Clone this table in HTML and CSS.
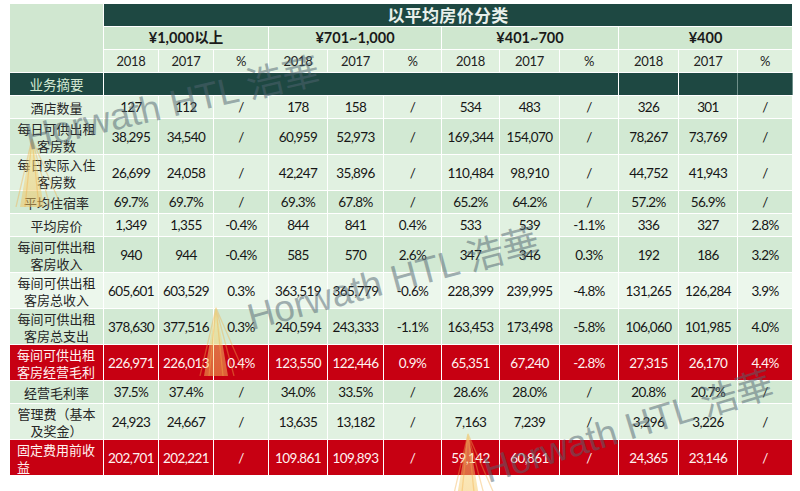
FILE: index.html
```html
<!DOCTYPE html>
<html lang="zh-CN">
<head>
<meta charset="utf-8">
<title>以平均房价分类</title>
<link rel="stylesheet" href="styles.css">
</head>
<body>
<div class="page">
  <table class="report">
    <colgroup>
      <col class="w-label">
      <col class="w55"><col class="w55"><col class="w55">
      <col class="w59"><col class="w56"><col class="w58">
      <col class="w58"><col class="w60"><col class="w59">
      <col class="w60"><col class="w59"><col class="w55">
    </colgroup>
    <thead>
      <tr class="s">
        <th class="corner" rowspan="3"></th>
        <th class="title" colspan="12">以平均房价分类</th>
      </tr>
      <tr class="s grp">
        <th colspan="3">¥1,000以上</th>
        <th colspan="3">¥701~1,000</th>
        <th colspan="3">¥401~700</th>
        <th colspan="3">¥400</th>
      </tr>
      <tr class="s yr">
        <th>2018</th><th>2017</th><th>%</th>
        <th>2018</th><th>2017</th><th>%</th>
        <th>2018</th><th>2017</th><th>%</th>
        <th>2018</th><th>2017</th><th>%</th>
      </tr>
    </thead>
    <tbody>
      <tr class="s sec">
        <th>业务摘要</th>
        <td colspan="9"></td><td></td><td></td><td></td>
      </tr>
      <tr class="s lt">
        <th>酒店数量</th>
        <td>127</td><td>112</td><td>/</td><td>178</td><td>158</td><td>/</td><td>534</td><td>483</td><td>/</td><td>326</td><td>301</td><td>/</td>
      </tr>
      <tr class="d dk">
        <th>每日可供出租客房数</th>
        <td>38,295</td><td>34,540</td><td>/</td><td>60,959</td><td>52,973</td><td>/</td><td>169,344</td><td>154,070</td><td>/</td><td>78,267</td><td>73,769</td><td>/</td>
      </tr>
      <tr class="d lt">
        <th>每日实际入住客房数</th>
        <td>26,699</td><td>24,058</td><td>/</td><td>42,247</td><td>35,896</td><td>/</td><td>110,484</td><td>98,910</td><td>/</td><td>44,752</td><td>41,943</td><td>/</td>
      </tr>
      <tr class="s dk">
        <th>平均住宿率</th>
        <td>69.7%</td><td>69.7%</td><td>/</td><td>69.3%</td><td>67.8%</td><td>/</td><td>65.2%</td><td>64.2%</td><td>/</td><td>57.2%</td><td>56.9%</td><td>/</td>
      </tr>
      <tr class="s lt">
        <th>平均房价</th>
        <td>1,349</td><td>1,355</td><td>-0.4%</td><td>844</td><td>841</td><td>0.4%</td><td>533</td><td>539</td><td>-1.1%</td><td>336</td><td>327</td><td>2.8%</td>
      </tr>
      <tr class="d dk">
        <th>每间可供出租客房收入</th>
        <td>940</td><td>944</td><td>-0.4%</td><td>585</td><td>570</td><td>2.6%</td><td>347</td><td>346</td><td>0.3%</td><td>192</td><td>186</td><td>3.2%</td>
      </tr>
      <tr class="d xl">
        <th>每间可供出租客房总收入</th>
        <td>605,601</td><td>603,529</td><td>0.3%</td><td>363,519</td><td>365,779</td><td>-0.6%</td><td>228,399</td><td>239,995</td><td>-4.8%</td><td>131,265</td><td>126,284</td><td>3.9%</td>
      </tr>
      <tr class="d dk">
        <th>每间可供出租客房总支出</th>
        <td>378,630</td><td>377,516</td><td>0.3%</td><td>240,594</td><td>243,333</td><td>-1.1%</td><td>163,453</td><td>173,498</td><td>-5.8%</td><td>106,060</td><td>101,985</td><td>4.0%</td>
      </tr>
      <tr class="d red">
        <th>每间可供出租客房经营毛利</th>
        <td>226,971</td><td>226,013</td><td>0.4%</td><td>123,550</td><td>122,446</td><td>0.9%</td><td>65,351</td><td>67,240</td><td>-2.8%</td><td>27,315</td><td>26,170</td><td>4.4%</td>
      </tr>
      <tr class="s dk">
        <th>经营毛利率</th>
        <td>37.5%</td><td>37.4%</td><td>/</td><td>34.0%</td><td>33.5%</td><td>/</td><td>28.6%</td><td>28.0%</td><td>/</td><td>20.8%</td><td>20.7%</td><td>/</td>
      </tr>
      <tr class="d lt">
        <th>管理费（基本及奖金）</th>
        <td>24,923</td><td>24,667</td><td>/</td><td>13,635</td><td>13,182</td><td>/</td><td>7,163</td><td>7,239</td><td>/</td><td>3,296</td><td>3,226</td><td>/</td>
      </tr>
      <tr class="d red">
        <th>固定费用前收益</th>
        <td>202,701</td><td>202,221</td><td>/</td><td>109.861</td><td>109,893</td><td>/</td><td>59,142</td><td>60,861</td><td>/</td><td>24,365</td><td>23,146</td><td>/</td>
      </tr>
    </tbody>
  </table>

  <svg class="logo logo1" viewBox="0 0 50 70" aria-hidden="true">
    <defs><linearGradient id="lg1" x1="0" y1="0" x2="0" y2="1"><stop offset="0" stop-color="#f8e88f"/><stop offset="1" stop-color="#f4c15a"/></linearGradient></defs>
    <polygon points="20,0 8,70 32,70" fill="url(#lg1)" opacity="0.5"/>
    <path d="M20,2 L4,70 M20,2 L13,70 M20,2 L27,70 M20,2 L38,70 M20,2 L47,64" stroke="#f2ae48" stroke-width="1.3" stroke-opacity="0.4" fill="none"/>
  </svg>
  <svg class="logo logo2" viewBox="0 0 50 70" aria-hidden="true">
    <defs><linearGradient id="lg2" x1="0" y1="0" x2="0" y2="1"><stop offset="0" stop-color="#f8e88f"/><stop offset="1" stop-color="#f4c15a"/></linearGradient></defs>
    <polygon points="20,0 8,70 32,70" fill="url(#lg2)" opacity="0.5"/>
    <path d="M20,2 L4,70 M20,2 L13,70 M20,2 L27,70 M20,2 L38,70 M20,2 L47,64" stroke="#f2ae48" stroke-width="1.3" stroke-opacity="0.4" fill="none"/>
  </svg>
  <svg class="logo logo3" viewBox="0 0 50 70" aria-hidden="true">
    <defs><linearGradient id="lg3" x1="0" y1="0" x2="0" y2="1"><stop offset="0" stop-color="#f8e88f"/><stop offset="1" stop-color="#f4c15a"/></linearGradient></defs>
    <polygon points="20,0 8,70 32,70" fill="url(#lg3)" opacity="0.5"/>
    <path d="M20,2 L4,70 M20,2 L13,70 M20,2 L27,70 M20,2 L38,70 M20,2 L47,64" stroke="#f2ae48" stroke-width="1.3" stroke-opacity="0.4" fill="none"/>
  </svg>

  <div class="wm wm1">Horwath HTL 浩華</div>
  <div class="wm wm2">Horwath HTL 浩華</div>
  <div class="wm wm3">Horwath HTL 浩華</div>
</div>
</body>
</html>
```

FILE: styles.css
```css
html, body {
  margin: 0;
  padding: 0;
  background: #ffffff;
}

.page {
  position: relative;
  width: 800px;
  height: 491px;
  box-sizing: border-box;
  padding: 3px 0 0 9px;
  overflow: hidden;
  font-family: "Lato", "Noto Sans CJK SC", sans-serif;
}

.report {
  border-collapse: collapse;
  table-layout: fixed;
  width: 783px;
}

.w-label { width: 94px; }
.w55 { width: 55px; }
.w56 { width: 56px; }
.w58 { width: 58px; }
.w59 { width: 59px; }
.w60 { width: 60px; }

.report th,
.report td {
  padding: 0;
  border: 1px solid #ffffff;
  text-align: center;
  vertical-align: middle;
  font-size: 13.5px;
  line-height: 18px;
  font-weight: 400;
  color: #161616;
  letter-spacing: -0.6px;
  white-space: nowrap;
}

.report tbody th {
  font-family: "Noto Sans CJK SC", sans-serif;
  font-size: 13px;
  line-height: 17px;
  letter-spacing: 0;
  white-space: normal;
  padding: 0 4px;
  color: #262626;
}

.report tr.s > th, .report tr.s > td { height: 22px; }
.report tr.d > th, .report tr.d > td { height: 35px; }

.report .corner {
  background: #d0e7d0;
}

.report .title {
  background: #1e4842;
  color: #e8f0eb;
  font-size: 17px;
  line-height: 20px;
  font-weight: 700;
  letter-spacing: 0.3px;
  font-family: "Noto Sans CJK SC", sans-serif;
}

.report .grp th {
  background: #cfe7cf;
  font-size: 14.5px;
  line-height: 20px;
  font-weight: 700;
  letter-spacing: 0;
  color: #1a1a1a;
}

.report .yr th {
  background: #dff0de;
  font-size: 13px;
  letter-spacing: -0.3px;
  color: #222;
}

.report .sec > th,
.report .sec > td {
  background: #1e4842;
}

.report .sec > th {
  color: #d3e9d3;
  font-size: 13.5px;
}

.report .sec > td + td + td,
.report .sec > td:last-child {
  border-left-color: #6f8f8a;
  border-right-color: #6f8f8a;
}

.report .lt > th, .report .lt > td { background: #e1f1e1; }
.report .dk > th, .report .dk > td { background: #d2e9d3; }
.report .xl > th, .report .xl > td { background: #ecf7ec; }

.report .red > th, .report .red > td {
  background: #c70012;
  color: #fff2f0;
}

.report .red > th {
  text-align: left;
  padding-left: 7px;
}

.logo {
  position: absolute;
  width: 50px;
  height: 70px;
  pointer-events: none;
}

.logo1 { left: 12px; top: 137px; }
.logo2 { left: 196px; top: 306px; }
.logo3 { left: 448px; top: 432px; }

.wm {
  position: absolute;
  font-family: "Liberation Sans", "Noto Sans CJK TC", sans-serif;
  font-size: 37px;
  line-height: 37px;
  color: rgba(80, 100, 112, 0.5);
  white-space: nowrap;
  transform-origin: 0 100%;
  pointer-events: none;
}

.wm1 { left: 30px; top: 119px; transform: rotate(-13deg); }
.wm2 { left: 253px; top: 299px; transform: rotate(-15deg); }
.wm3 { left: 490px; top: 452px; transform: rotate(-17deg); }
```
